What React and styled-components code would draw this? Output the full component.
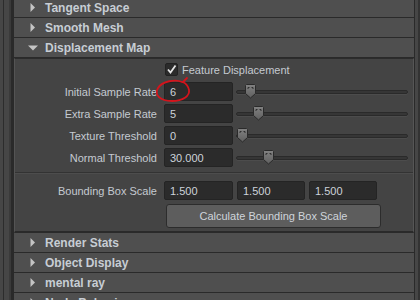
import styled, { createGlobalStyle } from "styled-components";

const Global = createGlobalStyle`
  body {
    margin: 0;
    background: #444444;
    font-family: "Liberation Sans", Arial, sans-serif;
  }
`;

export default function App() {
  return (
    <>
      <Global />
      <Window>
        <Gutter />
        <Column>
          <Header title="Tangent Space" />
          <Header title="Smooth Mesh" />
          <Header title="Displacement Map" open />
          <Content>
            <Row>
              <Label />
              <Check>
                <svg width="11" height="11" viewBox="0 0 11 11">
                  <path d="M2 5.5 L4.5 8.5 L9.5 1.5" fill="none" stroke="#e4e4e4" strokeWidth="1.8" />
                </svg>
              </Check>
              <CheckText>Feature Displacement</CheckText>
            </Row>
            <Row>
              <Label>Initial Sample Rate</Label>
              <Field>6</Field>
              <Slider pos={9} />
              <Circle width="50" height="32" viewBox="0 0 50 32">
                <path
                  d="M32 6 C26 3, 12 5, 8 12 C4 19, 10 25, 22 25 C33 25, 40 20, 39 14 C38 9, 35 7, 33 6 L37 2"
                  fill="none"
                  stroke="#d4141c"
                  strokeWidth="1.8"
                  strokeLinecap="round"
                />
              </Circle>
            </Row>
            <Row>
              <Label>Extra Sample Rate</Label>
              <Field>5</Field>
              <Slider pos={17} />
            </Row>
            <Row>
              <Label>Texture Threshold</Label>
              <Field>0</Field>
              <Slider pos={1} />
            </Row>
            <Row>
              <Label>Normal Threshold</Label>
              <Field>30.000</Field>
              <Slider pos={27} />
            </Row>
            <Divider />
            <Row>
              <Label>Bounding Box Scale</Label>
              <Field>1.500</Field>
              <Field $w={68} $ml={4}>1.500</Field>
              <Field $w={68} $ml={4}>1.500</Field>
            </Row>
            <ButtonRow>
              <Label />
              <Button>Calculate Bounding Box Scale</Button>
            </ButtonRow>
          </Content>
          <Header title="Render Stats" />
          <Header title="Object Display" />
          <Header title="mental ray" />
          <Header title="Node Behavior" />
        </Column>
        <RightEdge />
      </Window>
    </>
  );
}

function Header({ title, open }) {
  return (
    <HeaderBar>
      <Arrow>
        {open ? (
          <svg width="10" height="6" viewBox="0 0 10 6">
            <polygon points="0,0.5 10,0.5 5,5.5" fill="#c4c4c4" />
          </svg>
        ) : (
          <svg width="6" height="9" viewBox="0 0 6 9">
            <polygon points="0.5,0 5,4.5 0.5,9" fill="#c4c4c4" />
          </svg>
        )}
      </Arrow>
      <HeaderText>{title}</HeaderText>
    </HeaderBar>
  );
}

function Slider({ pos }) {
  return (
    <SliderBox>
      <Track />
      <Thumb $pos={pos} width="11" height="15" viewBox="0 0 11 15">
        <defs>
          <linearGradient id="thumbFill" x1="0" y1="0" x2="0" y2="1">
            <stop offset="0" stopColor="#828282" />
            <stop offset="1" stopColor="#5f5f5f" />
          </linearGradient>
        </defs>
        <polygon points="0.5,1.5 1.5,0.5 9.5,0.5 10.5,1.5 10.5,9.5 5.5,14 0.5,9.5" fill="url(#thumbFill)" stroke="#2a2a2a" />
        <path d="M3 5 V3.5 H4.5 M8 5 V3.5 H6.5" fill="none" stroke="#2e2e2e" strokeWidth="1" />
      </Thumb>
    </SliderBox>
  );
}

const Window = styled.div`
  display: flex;
  width: 420px;
  height: 300px;
  overflow: hidden;
  background: #444444;
`;

const Gutter = styled.div`
  width: 14px;
  flex-shrink: 0;
  background: linear-gradient(
    to right,
    #464646 0 3px,
    #2c2c2c 3px 4px,
    #464646 4px 9px,
    #3a3a3a 9px 11px,
    #2a2a2a 11px 14px
  );
`;

const RightEdge = styled.div`
  width: 6px;
  flex-shrink: 0;
  background: linear-gradient(
    to right,
    #2a2a2a 0 1px,
    #464646 1px 4px,
    #333333 4px 6px
  );
`;

const Column = styled.div`
  width: 400px;
  flex-shrink: 0;
  margin-top: -2px;
  display: flex;
  flex-direction: column;
`;

const HeaderBar = styled.div`
  height: 19px;
  flex-shrink: 0;
  display: flex;
  align-items: center;
  background: #4f4f4f;
  border-bottom: 1px solid #2a2a2a;
  padding-left: 6px;
`;

const Arrow = styled.div`
  width: 25px;
  display: flex;
  align-items: center;
  justify-content: center;
`;

const HeaderText = styled.span`
  color: #c7cdd4;
  font-size: 12px;
  font-weight: bold;
`;

const Content = styled.div`
  background: #444444;
  border-top: 1px solid #2c2c2c;
  border-left: 1px solid #545454;
  border-right: 1px solid #565656;
  border-bottom: 2px solid #2a2a2a;
  padding: 1px 5px 3px 0;
  display: flex;
  flex-direction: column;
  gap: 3px;
`;

const Row = styled.div`
  position: relative;
  height: 19px;
  display: flex;
  align-items: center;
`;

const ButtonRow = styled(Row)`
  height: 24px;
  margin-top: 1px;
`;

const Label = styled.div`
  width: 142px;
  margin-right: 7px;
  flex-shrink: 0;
  text-align: right;
  color: #c4cad1;
  font-size: 11px;
`;

const Field = styled.div`
  box-sizing: border-box;
  width: ${(p) => p.$w || 69}px;
  margin-left: ${(p) => p.$ml || 0}px;
  height: 19px;
  flex-shrink: 0;
  background: #2b2b2b;
  border: 1px solid #242424;
  border-radius: 2px;
  padding-left: 5px;
  display: flex;
  align-items: center;
  color: #cdd3da;
  font-size: 11px;
`;

const Check = styled.div`
  box-sizing: border-box;
  width: 13px;
  height: 13px;
  margin-left: 1px;
  background: #2b2b2b;
  border: 1px solid #222222;
  border-radius: 2px;
  display: flex;
  align-items: center;
  justify-content: center;
`;

const CheckText = styled.span`
  margin-left: 4px;
  color: #c4cad1;
  font-size: 11px;
`;

const SliderBox = styled.div`
  position: relative;
  flex: 1;
  height: 19px;
  margin-left: 3px;
  display: flex;
  align-items: center;
`;

const Track = styled.div`
  width: 100%;
  height: 4px;
  box-sizing: border-box;
  background: #363636;
  border: 1px solid #2a2a2a;
  border-radius: 3px;
  box-shadow: 0 1px 0 #4c4c4c;
`;

const Thumb = styled.svg`
  position: absolute;
  left: ${(p) => p.$pos}px;
  top: 2px;
`;

const Circle = styled.svg`
  position: absolute;
  left: 135px;
  top: -6px;
  pointer-events: none;
`;

const Divider = styled.div`
  height: 1px;
  margin: 2px -5px 4px 0;
  background: #333333;
  border-bottom: 1px solid #4d4d4d;
`;

const Button = styled.div`
  box-sizing: border-box;
  width: 215px;
  height: 24px;
  margin-left: 2px;
  background: #5d5d5d;
  border: 1px solid #2c2c2c;
  border-radius: 3px;
  display: flex;
  align-items: center;
  justify-content: center;
  color: #cfd4da;
  font-size: 11px;
`;
